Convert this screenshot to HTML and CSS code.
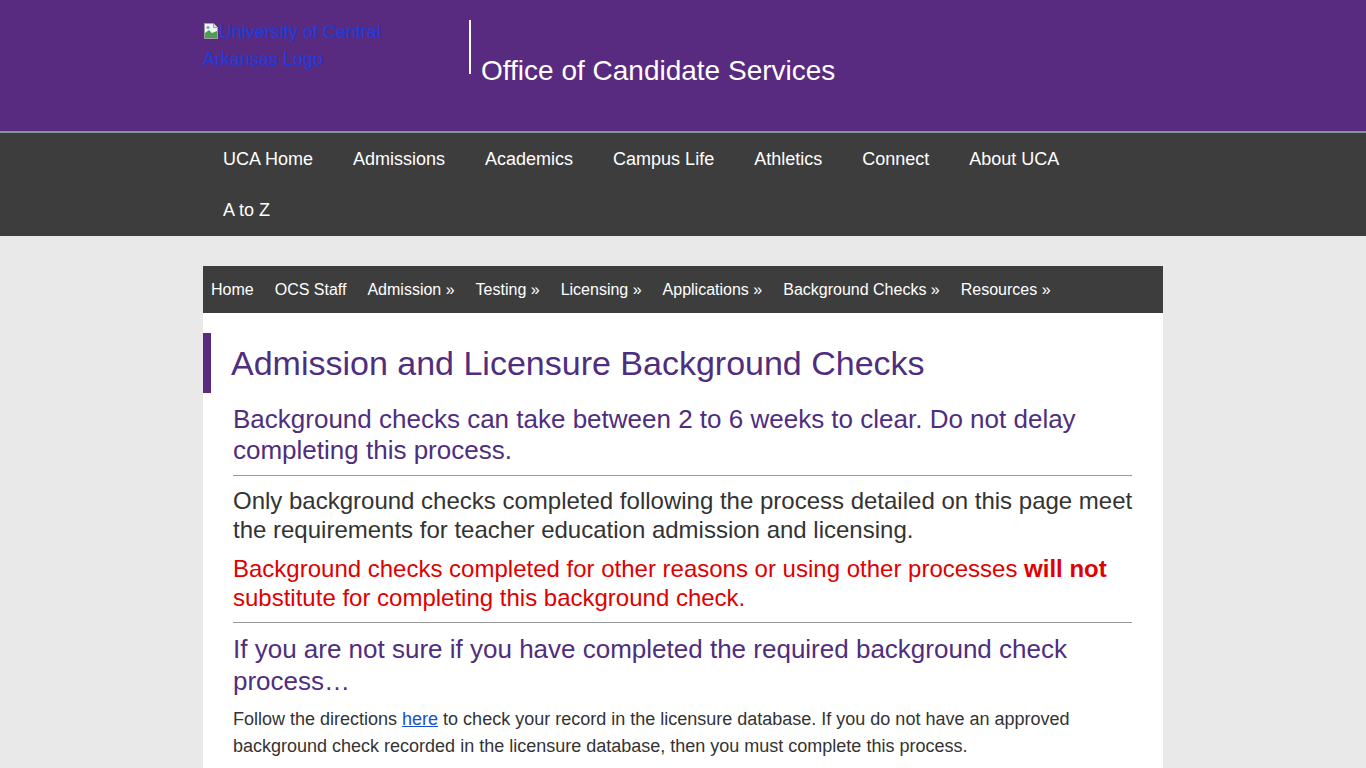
FILE: index.html
```html
<!DOCTYPE html>
<html lang="en">
<head>
<meta charset="utf-8">
<title>Admission and Licensure Background Checks</title>
<link rel="stylesheet" href="styles.css">
</head>
<body>
<header class="site-header">
  <div class="container header-inner">
    <a class="logo" href="#">
      <svg class="broken" width="16" height="18" viewBox="0 0 16 18" aria-hidden="true">
        <path d="M1.5 1.5h9l4 4v11h-13z" fill="#f4f4f4" stroke="#a0a0a0" stroke-width="1"/>
        <path d="M10.5 1.5v4h4" fill="#ddd" stroke="#a0a0a0" stroke-width="1"/>
        <path d="M2 16 L2 11 L6 8 L9 11 L14 9 L14 16 Z" fill="#4f9d55"/>
        <circle cx="5" cy="5.5" r="1.6" fill="#6fa3d8"/>
      </svg><span class="logo-alt">University of Central Arkansas Logo</span>
    </a>
    <div class="divider"></div>
    <div class="site-title">Office of Candidate Services</div>
  </div>
</header>
<nav class="main-nav">
  <ul class="container main-list">
    <li><a href="#">UCA Home</a></li>
    <li><a href="#">Admissions</a></li>
    <li><a href="#">Academics</a></li>
    <li><a href="#">Campus Life</a></li>
    <li><a href="#">Athletics</a></li>
    <li><a href="#">Connect</a></li>
    <li><a href="#">About UCA</a></li>
    <li><a href="#">A to Z</a></li>
  </ul>
</nav>
<main class="container page">
  <ul class="sub-nav">
    <li><a href="#">Home</a></li>
    <li><a href="#">OCS Staff</a></li>
    <li><a href="#">Admission »</a></li>
    <li><a href="#">Testing »</a></li>
    <li><a href="#">Licensing »</a></li>
    <li><a href="#">Applications »</a></li>
    <li><a href="#">Background Checks »</a></li>
    <li><a href="#">Resources »</a></li>
  </ul>
  <article class="content">
    <h1 class="page-title">Admission and Licensure Background Checks</h1>
    <div class="body">
      <p class="lead">Background checks can take between 2 to 6 weeks to clear. Do not delay completing this process.</p>
      <hr>
      <p class="big">Only background checks completed following the process detailed on this page meet the requirements for teacher education admission and licensing.</p>
      <p class="big warn">Background checks completed for other reasons or using other processes <strong>will not</strong> substitute for completing this background check.</p>
      <hr>
      <h2 class="sub">If you are not sure if you have completed the required background check process…</h2>
      <p class="small">Follow the directions <a href="#">here</a> to check your record in the licensure database. If you do not have an approved background check recorded in the licensure database, then you must complete this process.</p>
    </div>
  </article>
</main>
</body>
</html>
```
FILE: styles.css
```css
* { box-sizing: border-box; }
html, body { margin: 0; padding: 0; }
body {
  background: #e9e9e9;
  font-family: "Liberation Sans", Arial, sans-serif;
  color: #333;
}
.container {
  width: 960px;
  margin: 0 auto;
}
.site-header {
  background: #582a80;
  height: 131px;
  border-bottom: 2px solid #81998d;
  box-sizing: content-box;
}
.header-inner {
  display: flex;
  align-items: flex-start;
  padding-top: 20px;
}
.logo {
  width: 190px;
  font-size: 18px;
  line-height: 27px;
  color: #1a3de0;
  text-decoration: none;
  margin-top: -1px;
}
.broken { vertical-align: -2px; }
.divider {
  width: 2px;
  height: 54px;
  background: #fff;
  margin-left: 76px;
}
.site-title {
  color: #fff;
  font-size: 28px;
  margin-left: 10px;
  margin-top: 35px;
}
.main-nav {
  background: #3d3d3d;
  padding-top: 1px;
  height: 103px;
}
.main-list {
  list-style: none;
  padding: 0;
  margin: 0 auto;
  display: flex;
  flex-wrap: wrap;
}
.main-list a {
  display: block;
  padding: 0 20px;
  line-height: 51px;
  font-size: 18px;
  color: #fff;
  text-decoration: none;
}
.page {
  padding-top: 30px;
}
.sub-nav {
  list-style: none;
  margin: 0;
  padding: 0;
  background: #3d3d3d;
  display: flex;
  height: 47px;
  align-items: center;
}
.sub-nav a {
  display: block;
  padding: 0 13px 0 8px;
  font-size: 16px;
  color: #fff;
  text-decoration: none;
  line-height: 47px;
}
.content {
  background: #fff;
  padding: 20px 0 20px;
}
.page-title {
  margin: 0;
  border-left: 8px solid #582a80;
  padding-left: 20px;
  font-weight: normal;
  font-size: 34px;
  line-height: 60px;
  color: #4f2d7f;
}
.body {
  padding: 0 31px 0 30px;
}
.lead {
  margin: 11px 0 0;
  font-size: 26px;
  line-height: 31px;
  color: #4f2d7f;
}
hr {
  border: 0;
  border-top: 1px solid #999;
  margin: 9px 0 10px;
}
.big {
  margin: 0 -4px 10px 0;
  font-size: 24px;
  line-height: 29px;
  color: #333;
}
.warn { color: #e00000; margin-bottom: 10px; }
.warn strong { font-weight: bold; }
.sub {
  margin: 4px 0 9px;
  font-weight: normal;
  font-size: 26px;
  line-height: 32px;
  color: #4f2d7f;
}
.small {
  margin: 0;
  font-size: 18px;
  line-height: 27px;
  color: #333;
}
.small a { color: #1a4ed0; }
```
